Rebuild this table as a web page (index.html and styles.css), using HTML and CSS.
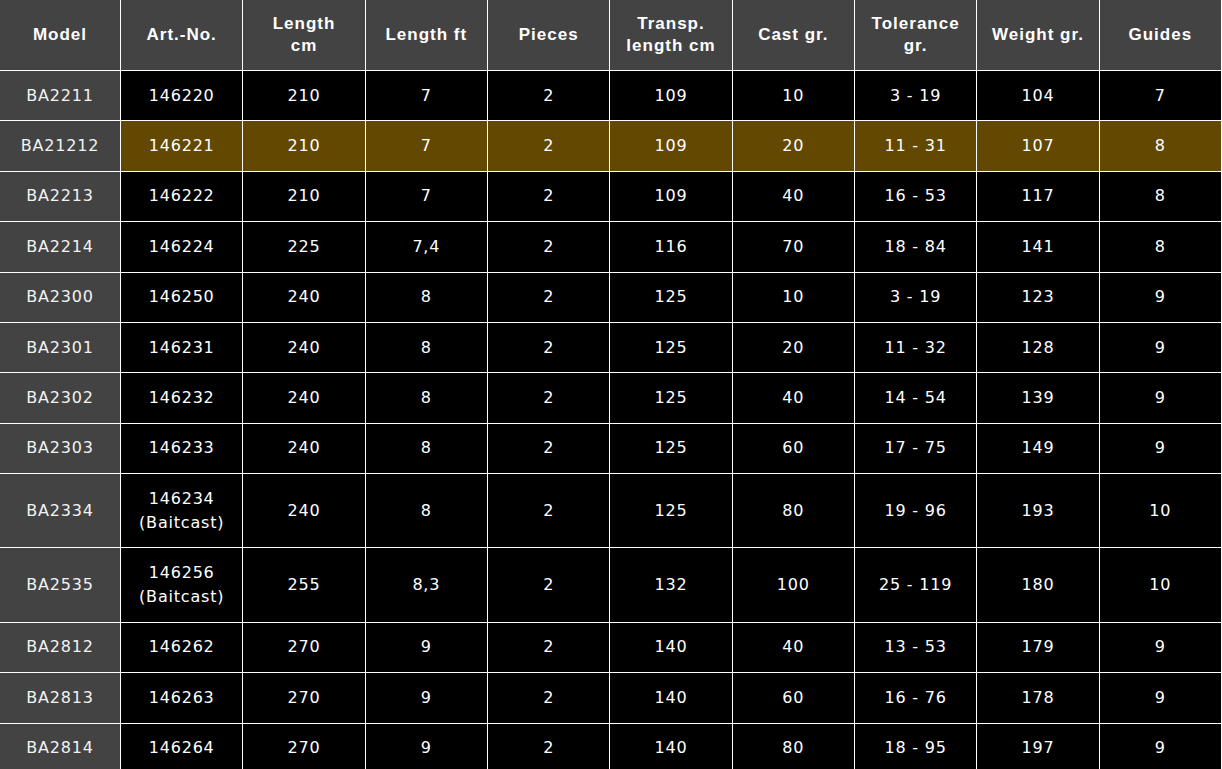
FILE: index.html
```html
<!DOCTYPE html>
<html>
<head>
<meta charset="utf-8">
<link rel="stylesheet" href="styles.css">
</head>
<body>
<table class="spec">
  <colgroup>
    <col class="col-first">
    <col><col><col><col><col><col><col><col><col>
  </colgroup>
  <thead>
    <tr>
      <th>Model</th><th>Art.-No.</th><th>Length<br>cm</th><th>Length ft</th><th>Pieces</th><th>Transp.<br>length cm</th><th>Cast gr.</th><th>Tolerance<br>gr.</th><th>Weight gr.</th><th>Guides</th>
    </tr>
  </thead>
  <tbody>
    <tr><td class="model">BA2211</td><td>146220</td><td>210</td><td>7</td><td>2</td><td>109</td><td>10</td><td>3 - 19</td><td>104</td><td>7</td></tr>
    <tr class="hl"><td class="model">BA21212</td><td>146221</td><td>210</td><td>7</td><td>2</td><td>109</td><td>20</td><td>11 - 31</td><td>107</td><td>8</td></tr>
    <tr><td class="model">BA2213</td><td>146222</td><td>210</td><td>7</td><td>2</td><td>109</td><td>40</td><td>16 - 53</td><td>117</td><td>8</td></tr>
    <tr><td class="model">BA2214</td><td>146224</td><td>225</td><td>7,4</td><td>2</td><td>116</td><td>70</td><td>18 - 84</td><td>141</td><td>8</td></tr>
    <tr><td class="model">BA2300</td><td>146250</td><td>240</td><td>8</td><td>2</td><td>125</td><td>10</td><td>3 - 19</td><td>123</td><td>9</td></tr>
    <tr><td class="model">BA2301</td><td>146231</td><td>240</td><td>8</td><td>2</td><td>125</td><td>20</td><td>11 - 32</td><td>128</td><td>9</td></tr>
    <tr><td class="model">BA2302</td><td>146232</td><td>240</td><td>8</td><td>2</td><td>125</td><td>40</td><td>14 - 54</td><td>139</td><td>9</td></tr>
    <tr><td class="model">BA2303</td><td>146233</td><td>240</td><td>8</td><td>2</td><td>125</td><td>60</td><td>17 - 75</td><td>149</td><td>9</td></tr>
    <tr><td class="model">BA2334</td><td>146234<br>(Baitcast)</td><td>240</td><td>8</td><td>2</td><td>125</td><td>80</td><td>19 - 96</td><td>193</td><td>10</td></tr>
    <tr><td class="model">BA2535</td><td>146256<br>(Baitcast)</td><td>255</td><td>8,3</td><td>2</td><td>132</td><td>100</td><td>25 - 119</td><td>180</td><td>10</td></tr>
    <tr><td class="model">BA2812</td><td>146262</td><td>270</td><td>9</td><td>2</td><td>140</td><td>40</td><td>13 - 53</td><td>179</td><td>9</td></tr>
    <tr><td class="model">BA2813</td><td>146263</td><td>270</td><td>9</td><td>2</td><td>140</td><td>60</td><td>16 - 76</td><td>178</td><td>9</td></tr>
    <tr><td class="model">BA2814</td><td>146264</td><td>270</td><td>9</td><td>2</td><td>140</td><td>80</td><td>18 - 95</td><td>197</td><td>9</td></tr>
  </tbody>
</table>
</body>
</html>
```
FILE: styles.css
```css
html, body {
  margin: 0;
  padding: 0;
  background: #000;
}
.spec {
  width: 1222px;
  table-layout: fixed;
  border-collapse: separate;
  border-spacing: 0;
  color: #fff;
}
.spec .col-first {
  width: 121px;
}
.spec th, .spec td {
  border-right: 1px solid #fff;
  border-bottom: 1px solid #fff;
  text-align: center;
  vertical-align: middle;
}
.spec th {
  background: #434343;
  font-family: "Liberation Sans", Arial, sans-serif;
  font-weight: bold;
  font-size: 17px;
  letter-spacing: 1px;
  line-height: 22px;
  height: 71px;
  padding: 0 4px;
  box-sizing: border-box;
}
.spec td {
  background: #000;
  font-family: "DejaVu Sans", Verdana, sans-serif;
  font-size: 16px;
  letter-spacing: 0.8px;
  line-height: 24px;
  padding: 12.7px 4px;
}
.spec td.model {
  background: #434343;
  color: #f2f2f2;
}
.spec tr.hl td:not(.model) {
  background: #624800;
}
```
